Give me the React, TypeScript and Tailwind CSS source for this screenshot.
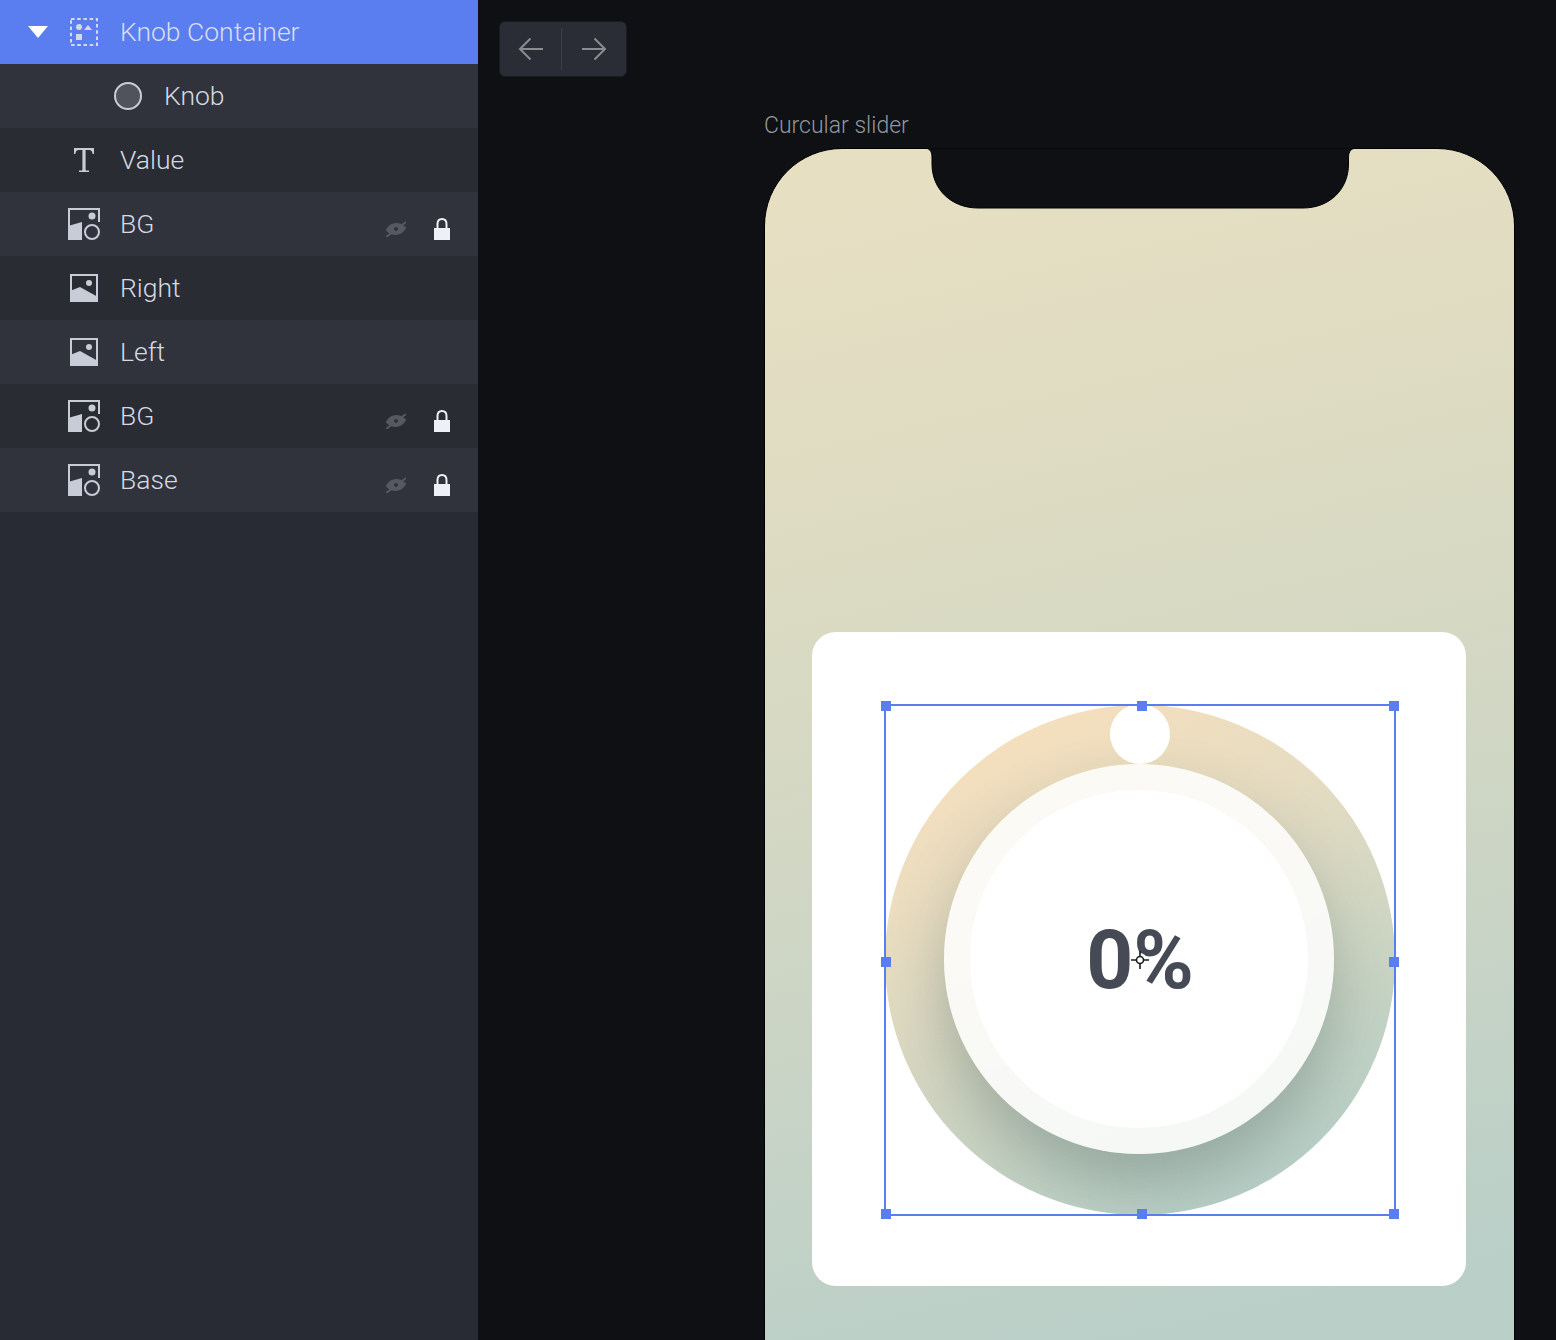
const rows = [
  { name: "Knob", icon: "knob", indent: true },
  { name: "Value", icon: "text" },
  { name: "BG", icon: "multi", locked: true },
  { name: "Right", icon: "image" },
  { name: "Left", icon: "image" },
  { name: "BG", icon: "multi", locked: true },
  { name: "Base", icon: "multi", locked: true },
];

const handles = [
  "left-[-5px] top-[-5px]",
  "left-[251px] top-[-5px]",
  "right-[-5px] top-[-5px]",
  "left-[-5px] top-[251px]",
  "right-[-5px] top-[251px]",
  "left-[-5px] bottom-[-5px]",
  "left-[251px] bottom-[-5px]",
  "right-[-5px] bottom-[-5px]",
];

function GroupIcon() {
  return (
    <svg width="28" height="28" viewBox="0 0 28 28" fill="#d5d9e6">
      <rect x="1" y="1" width="26" height="26" fill="none" stroke="#d5d9e6" strokeWidth="2" strokeDasharray="3.5 2.7" />
      <circle cx="9" cy="9" r="3" />
      <path d="M14 12 L18 7 L22 12 Z" />
      <rect x="6" y="16" width="6" height="6" />
    </svg>
  );
}

function RowIcon({ type }: { type: string }) {
  if (type === "knob") {
    return (
      <svg width="28" height="28" viewBox="0 0 28 28">
        <circle cx="14" cy="14" r="13" fill="#50535c" stroke="#c8ccd4" strokeWidth="2" />
      </svg>
    );
  }
  if (type === "text") {
    return (
      <svg width="20" height="24" viewBox="0 0 20 24" fill="#c8ccd6">
        <path d="M0 0 H20 V6 H18.6 C18.4 3.4 17.4 2 15 2 H11.6 V21.6 C11.6 22.2 12 22.6 12.6 22.6 H15 V24 H5 V22.6 H7.4 C8 22.6 8.4 22.2 8.4 21.6 V2 H5 C2.6 2 1.6 3.4 1.4 6 H0 Z" />
      </svg>
    );
  }
  if (type === "multi") {
    return (
      <svg width="32" height="32" viewBox="0 0 32 32" fill="#c8ccd6">
        <path d="M0 0 H32 V14 H30 V2 H2 V18 L0 18 Z" />
        <path d="M0 18 L14 14 V32 H0 Z" />
        <circle cx="24" cy="8" r="3.5" />
        <circle cx="24" cy="24" r="7" fill="none" stroke="#c8ccd6" strokeWidth="2" />
      </svg>
    );
  }
  return (
    <svg width="28" height="28" viewBox="0 0 28 28" fill="#c8ccd6">
      <rect x="1" y="1" width="26" height="26" fill="none" stroke="#c8ccd6" strokeWidth="2" />
      <circle cx="19" cy="9" r="3" />
      <path d="M0 17 L10 13 L28 23 V28 H0 Z" />
    </svg>
  );
}

function EyeOff() {
  return (
    <svg width="20" height="16" viewBox="0 0 20 16" fill="none" stroke="#565962" strokeWidth="2">
      <path d="M1 9 C4 4 7 3 10 3 C13 3 16 4 19 7 C16 12 13 13 10 13 C7 13 4 12 1 9 Z" fill="#565962" />
      <path d="M0 16 L20 1" />
      <circle cx="10" cy="8" r="2" fill="#30333c" stroke="none" />
    </svg>
  );
}

function Lock() {
  return (
    <svg width="16" height="22" viewBox="0 0 16 22" fill="#eef0f5">
      <path d="M3.5 11 V6 C3.5 3 5.3 1 8 1 C10.7 1 12.5 3 12.5 6 V11" fill="none" stroke="#eef0f5" strokeWidth="2" />
      <rect x="0" y="10" width="16" height="12" />
    </svg>
  );
}

function Sidebar() {
  return (
    <div className="w-[478px] shrink-0 h-full bg-[#282b34] text-[26.5px] font-light text-[#d5d9e2]">
      <div className="h-16 flex items-center pl-7 bg-[#5a7df0]">
        <svg width="20" height="12" viewBox="0 0 20 12" fill="#ffffff">
          <path d="M0 0 H20 L10 12 Z" />
        </svg>
        <div className="ml-[18px] w-9 flex justify-center">
          <GroupIcon />
        </div>
        <span className="ml-[18px] text-[#d9def0]">Knob Container</span>
      </div>
      {rows.map((row, i) => (
        <div
          key={i}
          className={`h-16 flex items-center pr-7 ${row.indent ? "pl-[110px]" : "pl-[66px]"} ${
            i % 2 === 0 ? "bg-[#30333c]" : "bg-[#2a2c34]"
          }`}
        >
          <div className="w-9 flex justify-center">
            <RowIcon type={row.icon} />
          </div>
          <span className="ml-[18px] flex-1">{row.name}</span>
          {row.locked && (
            <div className="flex items-center gap-7 mt-[10px]">
              <EyeOff />
              <Lock />
            </div>
          )}
        </div>
      ))}
    </div>
  );
}

function NavButtons() {
  return (
    <div className="ml-[21px] mt-[21px] w-[128px] h-14 flex items-center rounded-md bg-[#2a2d35] border border-[#1a1c22]">
      <div className="w-[61px] flex justify-center">
        <svg width="26" height="24" viewBox="0 0 26 24" fill="none" stroke="#8a8c92" strokeWidth="2">
          <path d="M25 12 H2 M12.5 1.5 L2 12 L12.5 22.5" />
        </svg>
      </div>
      <div className="w-px h-[42px] bg-[#3c3f47]" />
      <div className="flex-1 flex justify-center">
        <svg width="26" height="24" viewBox="0 0 26 24" fill="none" stroke="#8a8c92" strokeWidth="2">
          <path d="M1 12 H24 M13.5 1.5 L24 12 L13.5 22.5" />
        </svg>
      </div>
    </div>
  );
}

function Crosshair() {
  return (
    <svg className="absolute left-[243px] top-[243px]" width="24" height="24" viewBox="0 0 24 24" fill="none">
      <circle cx="12" cy="12" r="7" fill="#ffffff" fillOpacity="0.85" />
      <circle cx="12" cy="12" r="3.5" stroke="#1c1c1c" strokeWidth="1.6" />
      <path d="M12 3 V8 M12 16 V21 M3 12 H8 M16 12 H21" stroke="#1c1c1c" strokeWidth="1.6" />
    </svg>
  );
}

function Dial() {
  return (
    <div className="relative w-[510px] h-[510px]">
      <div className="w-full h-full rounded-full overflow-hidden flex items-center justify-center pr-[2px] pb-[2px] bg-[linear-gradient(155deg,#f4dfbd_12%,#e6dcc1_35%,#c4d3c4_72%,#b6cfc8_92%)]">
        <div className="w-[390px] h-[390px] shrink-0 rounded-full flex items-center justify-center bg-white/85 shadow-[0_32px_60px_rgba(60,85,85,0.32)]">
          <div className="w-[338px] h-[338px] rounded-full bg-white flex items-center justify-center">
            <span className="font-['Roboto',sans-serif] font-bold text-[82px] leading-none text-[#454a55] ml-[2px] mt-[2px]">0%</span>
          </div>
        </div>
      </div>
      <div className="absolute left-[225px] top-[-1px] w-[60px] h-[60px] rounded-full bg-white" />
      <div className="absolute inset-[-1px] border-2 border-[#5a7df0]">
        {handles.map((pos) => (
          <div key={pos} className={`absolute w-[10px] h-[10px] bg-[#5a7df0] ${pos}`} />
        ))}
      </div>
      <Crosshair />
    </div>
  );
}

function Phone() {
  return (
    <div className="relative ml-[286px] mt-[8px] w-[751px] h-[1260px] rounded-t-[78px] border border-black bg-[linear-gradient(167deg,#e7dfc2_4%,#dcdbc2_30%,#cfd6c4_55%,#b9cfc8_90%)]">
      {/* notch with its small fillets at the top edge */}
      <svg className="absolute left-[158px] top-[-1px]" width="435" height="61" viewBox="0 0 435 61">
        <path
          d="M0 0 H435 C428 0 425.500 3 425.500 10 V16 C425.500 42 406 60 380 60 H55 C29 60 9 42 9 16 V10 C9 3 7 0 0 0 Z"
          fill="#0e1014"
          stroke="#000000"
          strokeWidth="1"
        />
      </svg>
      <div className="ml-[47px] mt-[483px] w-[654px] h-[654px] rounded-[24px] bg-white pl-[73px] pt-[73px]">
        <Dial />
      </div>
    </div>
  );
}

export default function App() {
  return (
    <div className="w-[1556px] h-[1340px] flex overflow-hidden bg-[#0e1014] font-['Roboto',sans-serif]">
      <Sidebar />
      <div className="flex-1 h-full overflow-hidden">
        <NavButtons />
        <p className="ml-[286px] mt-[35px] h-[28px] leading-[28px] text-[23px] font-light text-[#93969f]">Curcular slider</p>
        <Phone />
      </div>
    </div>
  );
}
